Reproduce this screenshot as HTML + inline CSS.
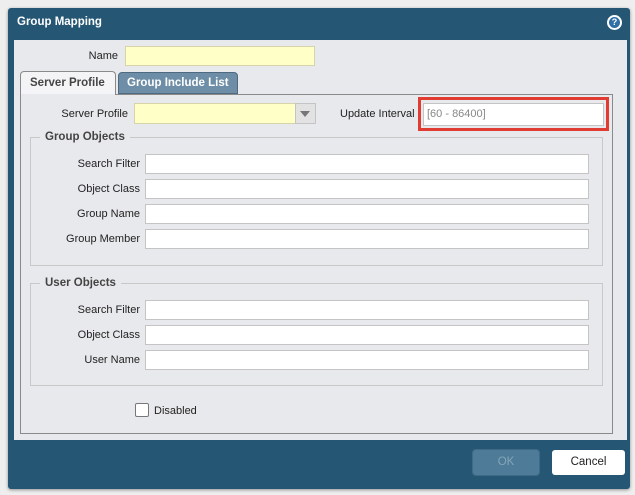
<!DOCTYPE html>
<html><head><style>
*{margin:0;padding:0;box-sizing:border-box}
body{width:635px;height:495px;background:#eeeeee;font-family:"Liberation Sans",Tahoma,sans-serif;font-size:11px;color:#222;position:relative;overflow:hidden}
.a{position:absolute}
.dlg{left:8px;top:8px;width:622px;height:481px;background:#255775;border-radius:3px;box-shadow:0 1px 3px rgba(0,0,0,.4)}
.title{left:17px;top:16px;color:#fff;font-weight:bold;font-size:11.5px}
.content{left:14px;top:40px;width:613px;height:400px;background:#e8e9ec}
.lbl{text-align:right;width:120px}
.in{background:#fff;border:1px solid #c4c4c4;height:20px}
.y{background:#ffffc8;border:1px solid #d6d4a8}
.fs{border:1px solid #c8c8c8}
.leg{background:#e8e9ec;padding:0 5px;font-weight:bold;color:#444;font-size:11.5px}
</style></head><body>
<div class="a dlg"></div>
<div class="a title">Group Mapping</div>
<div class="a" style="left:607px;top:15px;width:15px;height:15px;border-radius:50%;background:#fff;"></div>
<div class="a" style="left:609px;top:17px;width:11px;height:11px;border-radius:50%;background:#2f6fa5;color:#fff;font-weight:bold;font-size:9px;text-align:center;line-height:11px">?</div>
<div class="a content"></div>
<div class="a lbl" style="left:0;top:50px;width:118px">Name</div>
<div class="a in y" style="left:125px;top:46px;width:190px;height:20px"></div>
<!-- tabs -->
<div class="a" style="left:20px;top:71px;width:96px;height:24px;background:#f4f4f6;border:1px solid #8a8a8a;border-bottom:none;border-radius:4px 4px 0 0;font-weight:bold;color:#444;font-size:11.5px;padding:5px 0 0 9px">Server Profile</div>
<div class="a" style="left:118px;top:72px;width:120px;height:22px;background:#6d8ea6;border:1px solid #4d6a80;border-radius:4px 4px 0 0;font-weight:bold;color:#fff;font-size:11.5px;padding:4px 0 0 8px">Group Include List</div>
<div class="a" style="left:20px;top:94px;width:593px;height:340px;border:1px solid #8a8a8a;border-top:1px solid #8a8a8a"></div>
<div class="a" style="left:21px;top:94px;width:94px;height:2px;background:#e8e9ec"></div>
<div class="a lbl" style="left:8px;top:108px">Server Profile</div>
<div class="a in y" style="left:134px;top:103px;width:162px;height:21px"></div>
<div class="a" style="left:295px;top:103px;width:21px;height:21px;background:#e2e2e2;border:1px solid #c4c4c4"></div>
<div class="a" style="left:300px;top:111px;width:0;height:0;border-left:5px solid transparent;border-right:5px solid transparent;border-top:6px solid #777"></div>
<div class="a" style="left:340px;top:108px">Update Interval</div>
<div class="a" style="left:418px;top:97px;width:191px;height:34px;border:3px solid #e03c31"></div>
<div class="a in" style="left:423px;top:103px;width:181px;height:23px;color:#888;padding:4px 0 0 3px">[60 - 86400]</div>
<!-- group objects -->
<div class="a fs" style="left:30px;top:137px;width:573px;height:129px"></div>
<div class="a leg" style="left:40px;top:131px">Group Objects</div>
<div class="a lbl" style="left:20px;top:158px">Search Filter</div>
<div class="a in" style="left:145px;top:154px;width:444px"></div>
<div class="a lbl" style="left:20px;top:183px">Object Class</div>
<div class="a in" style="left:145px;top:179px;width:444px"></div>
<div class="a lbl" style="left:20px;top:208px">Group Name</div>
<div class="a in" style="left:145px;top:204px;width:444px"></div>
<div class="a lbl" style="left:20px;top:233px">Group Member</div>
<div class="a in" style="left:145px;top:229px;width:444px"></div>
<!-- user objects -->
<div class="a fs" style="left:30px;top:283px;width:573px;height:103px"></div>
<div class="a leg" style="left:40px;top:277px">User Objects</div>
<div class="a lbl" style="left:20px;top:304px">Search Filter</div>
<div class="a in" style="left:145px;top:300px;width:444px"></div>
<div class="a lbl" style="left:20px;top:329px">Object Class</div>
<div class="a in" style="left:145px;top:325px;width:444px"></div>
<div class="a lbl" style="left:20px;top:354px">User Name</div>
<div class="a in" style="left:145px;top:350px;width:444px"></div>
<div class="a" style="left:135px;top:403px;width:14px;height:14px;background:#fff;border:1px solid #777;border-radius:2px"></div>
<div class="a" style="left:154px;top:405px">Disabled</div>
<div class="a" style="left:472px;top:449px;width:68px;height:27px;background:#4d7b98;border:1px solid #3e6a86;border-radius:4px;color:#86a4b8;text-align:center;line-height:25px;font-size:11.5px">OK</div>
<div class="a" style="left:552px;top:450px;width:73px;height:25px;background:#fff;border-radius:3px;text-align:center;line-height:25px;font-size:11.5px">Cancel</div>
</body></html>
